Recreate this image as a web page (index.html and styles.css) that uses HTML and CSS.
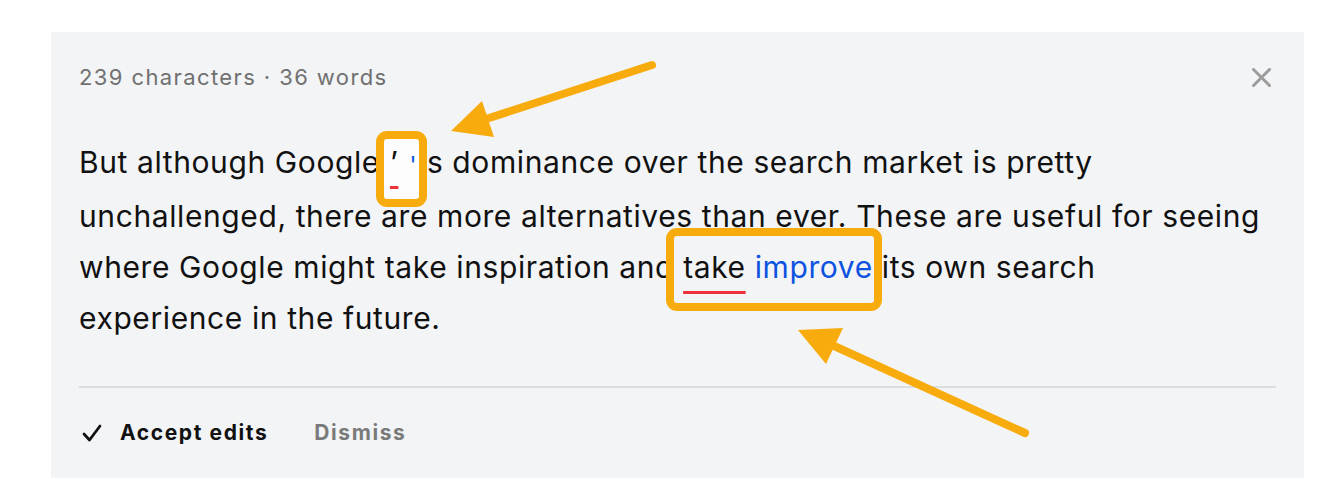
FILE: index.html
```html
<!DOCTYPE html>
<html lang="en">
<head>
<meta charset="utf-8">
<title>Edit suggestion</title>
<link rel="stylesheet" href="styles.css">
</head>
<body>
<div class="page">
  <section class="panel">
    <header class="panel-head">
      <span class="meta">239 characters · 36 words</span>
      <button class="close" aria-label="Close">
        <svg width="19" height="19" viewBox="0 0 19 19"><path d="M1.5 1.5 L17.5 17.5 M17.5 1.5 L1.5 17.5" stroke="#9c9c9c" stroke-width="3" stroke-linecap="square"/></svg>
      </button>
    </header>
    <p class="text">But although Google<span class="edit edit-a"><del class="del">’</del><ins class="ins">'</ins></span>s dominance over the search market is pretty unchallenged, there are more alternatives than ever. These are useful for seeing where Google might take inspiration and <span class="edit edit-b"><del class="del">take</del> <ins class="ins">improve</ins></span> its own search experience in the future.</p>
    <hr class="divider">
    <footer class="actions">
      <button class="btn btn-accept">
        <svg width="20" height="20" viewBox="0 0 20 20"><path d="M2 11 L7.5 17 L18 3" fill="none" stroke="#111" stroke-width="2.8" stroke-linecap="round" stroke-linejoin="round"/></svg>
        <span>Accept edits</span>
      </button>
      <button class="btn btn-dismiss">Dismiss</button>
    </footer>
  </section>
  <svg class="annot" width="1343" height="493" viewBox="0 0 1343 493">
    <line x1="652" y1="65" x2="486" y2="119" stroke="#f8ab0c" stroke-width="8" stroke-linecap="round"/>
    <polygon points="451,131 482,101 494,137" fill="#f8ab0c"/>
    <line x1="1025" y1="433" x2="832" y2="345" stroke="#f8ab0c" stroke-width="8" stroke-linecap="round"/>
    <polygon points="798,330 843,328 826,364" fill="#f8ab0c"/>
  </svg>
</div>
</body>
</html>
```

FILE: styles.css
```css
* { box-sizing: border-box; }
html, body { margin: 0; padding: 0; background: #ffffff; }
body {
  font-family: "Inter", "Liberation Sans", sans-serif;
  color: #111111;
}

.page { position: relative; width: 1343px; height: 493px; padding: 32px 0 0 51px; overflow: hidden; }

.panel {
  position: relative;
  isolation: isolate;
  width: 1253px;
  height: 446px;
  background: #f3f4f6;
  padding: 33px 28px 0 28px;
}

.panel-head {
  display: flex;
  align-items: center;
  justify-content: space-between;
  height: 24px;
}
.meta {
  font-size: 22px;
  line-height: 24px;
  letter-spacing: 1.4px;
  color: #707070;
}
.close {
  border: 0;
  background: none;
  padding: 0;
  margin-right: 5px;
  width: 19px;
  height: 19px;
  display: flex;
}

.text {
  margin: 48px 0 0 0;
  max-width: 1184px;
  font-size: 30px;
  line-height: 51px;
  letter-spacing: 0.6px;
  color: #111111;
}

.del, .ins { text-decoration: none; }
.del {
  text-decoration: underline;
  text-decoration-color: #ee3338;
  text-decoration-thickness: 3px;
  text-underline-offset: 13px;
  color: #111111;
}
.ins { color: #0d52e0; }

.edit { position: relative; }
.edit::after {
  content: "";
  position: absolute;
  border: 8px solid #f8ab0c;
  border-radius: 11px;
  pointer-events: none;
}
.edit-a .del { margin-left: 10px; padding-right: 1px; }
.edit-a .ins { margin-left: 10px; margin-right: 10px; font-size: 23px; }
.edit-a::before {
  content: "";
  position: absolute;
  left: 4px; right: 8px; top: -5px; bottom: -19px;
  background: #fdfdfd;
  z-index: -1;
}
.edit-a::after { left: -4px; right: 0; top: -13px; bottom: -27px; }
.edit-b::after { left: -17px; right: -9px; top: -21px; bottom: -26px; }

.divider {
  margin: 42px 0 0 0;
  border: 0;
  height: 2px;
  background: #dcdde0;
}

.actions {
  display: flex;
  align-items: center;
  gap: 46px;
  margin-top: 32px;
  height: 26px;
}
.btn {
  border: 0;
  background: none;
  padding: 0;
  font-family: "Inter", "Liberation Sans", sans-serif;
  font-size: 21px;
  line-height: 26px;
  letter-spacing: 1.6px;
  font-weight: 700;
  display: flex;
  align-items: center;
}
.btn-accept { color: #111111; gap: 18px; margin-left: 3px; }
.btn-dismiss { color: #7a7a7a; }

.annot {
  position: absolute;
  left: 0;
  top: 0;
  pointer-events: none;
}
```
